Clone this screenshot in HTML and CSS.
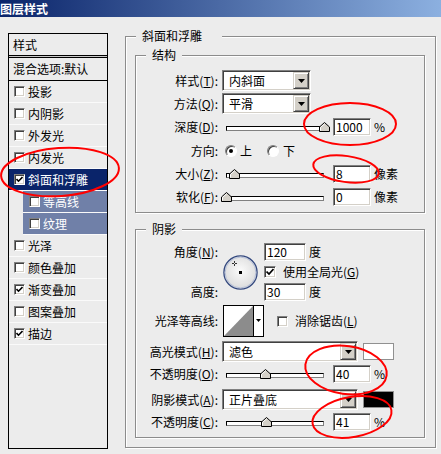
FILE: index.html
```html
<!DOCTYPE html>
<html lang="zh-CN">
<head>
<meta charset="utf-8">
<title>图层样式</title>
<link rel="stylesheet" href="styles.css">
</head>
<body>
<div class="window">
  <div class="titlebar">图层样式</div>
  <div class="content">
    <div class="stylelist">
      <div class="list-head">样式</div>
      <div class="list-sep"></div>
      <div class="list-blend">混合选项:默认</div>
      <div class="list-item"><span class="cb"></span>投影</div>
      <div class="list-item"><span class="cb"></span>内阴影</div>
      <div class="list-item"><span class="cb"></span>外发光</div>
      <div class="list-item"><span class="cb"></span>内发光</div>
      <div class="list-item selected"><span class="cb"><svg width="7" height="7" viewBox="0 0 7 7"><polyline points="0.5,3 2.5,5.2 6.5,1" fill="none" stroke="#000" stroke-width="1.6"/></svg></span>斜面和浮雕</div>
      <div class="list-item sub"><span class="cb"></span>等高线</div>
      <div class="list-item sub"><span class="cb"></span>纹理</div>
      <div class="list-item"><span class="cb"></span>光泽</div>
      <div class="list-item"><span class="cb"></span>颜色叠加</div>
      <div class="list-item"><span class="cb"><svg width="7" height="7" viewBox="0 0 7 7"><polyline points="0.5,3 2.5,5.2 6.5,1" fill="none" stroke="#000" stroke-width="1.6"/></svg></span>渐变叠加</div>
      <div class="list-item"><span class="cb"></span>图案叠加</div>
      <div class="list-item"><span class="cb"><svg width="7" height="7" viewBox="0 0 7 7"><polyline points="0.5,3 2.5,5.2 6.5,1" fill="none" stroke="#000" stroke-width="1.6"/></svg></span>描边</div>
    </div>

    <div class="group outer">
      <div class="legend legend-outer">斜面和浮雕</div>

      <div class="group inner structure">
        <div class="legend">结构</div>
        <div class="row r-style">
          <span class="lbl">样式(<u>T</u>):</span>
          <div class="select w-short"><span class="select-text">内斜面</span><span class="select-btn"><svg width="7" height="4" viewBox="0 0 7 4"><path d="M0 0h7L3.5 4z" fill="#000"/></svg></span></div>
        </div>
        <div class="row r-method">
          <span class="lbl">方法(<u>Q</u>):</span>
          <div class="select w-short"><span class="select-text">平滑</span><span class="select-btn"><svg width="7" height="4" viewBox="0 0 7 4"><path d="M0 0h7L3.5 4z" fill="#000"/></svg></span></div>
        </div>
        <div class="row r-depth">
          <span class="lbl">深度(<u>D</u>):</span>
          <div class="slider"><div class="track"></div><svg class="thumb" style="left:100%" width="11" height="10" viewBox="0 0 11 10"><path d="M0.5 9.5V5L5.5 0.5L10.5 5V9.5Z" fill="#d4d0c8" stroke="#000"/><path d="M1.5 8.5V5.4L5.5 1.9" fill="none" stroke="#fff"/></svg></div>
          <div class="input">1000</div>
          <span class="unit">%</span>
        </div>
        <div class="row r-dir">
          <span class="lbl">方向:</span>
          <span class="radio on"></span><span class="radio-label">上</span>
          <span class="radio second"></span><span class="radio-label second-label">下</span>
        </div>
        <div class="row r-size">
          <span class="lbl">大小(<u>Z</u>):</span>
          <div class="slider"><div class="track"></div><svg class="thumb" style="left:8%" width="11" height="10" viewBox="0 0 11 10"><path d="M0.5 9.5V5L5.5 0.5L10.5 5V9.5Z" fill="#d4d0c8" stroke="#000"/><path d="M1.5 8.5V5.4L5.5 1.9" fill="none" stroke="#fff"/></svg></div>
          <div class="input">8</div>
          <span class="unit">像素</span>
        </div>
        <div class="row r-soften">
          <span class="lbl">软化(<u>F</u>):</span>
          <div class="slider"><div class="track"></div><svg class="thumb" style="left:0%" width="11" height="10" viewBox="0 0 11 10"><path d="M0.5 9.5V5L5.5 0.5L10.5 5V9.5Z" fill="#d4d0c8" stroke="#000"/><path d="M1.5 8.5V5.4L5.5 1.9" fill="none" stroke="#fff"/></svg></div>
          <div class="input">0</div>
          <span class="unit">像素</span>
        </div>
      </div>

      <div class="group inner shadow">
        <div class="legend">阴影</div>
        <div class="angle-block">
          <span class="lbl lbl-angle">角度(<u>N</u>):</span>
          <svg class="dial" width="35" height="35" viewBox="0 0 35 35">
            <defs><radialGradient id="dg" cx="50%" cy="45%" r="60%"><stop offset="0" stop-color="#fbfbfb"/><stop offset="1" stop-color="#d8d8d8"/></radialGradient></defs>
            <circle cx="17.5" cy="17.5" r="16.6" fill="url(#dg)" stroke="#34497f" stroke-width="1.3"/>
            <circle cx="17.5" cy="17.5" r="15.4" fill="none" stroke="#a9b6d4" stroke-width="0.8"/>
            <path d="M11.5 6v2M11.5 9v2M9 8.5h2M12 8.5h2" stroke="#333" stroke-width="1"/>
            <rect x="16" y="16" width="3" height="3" fill="#000"/>
          </svg>
          <div class="cell cell-angle"><div class="input angle">120</div><span class="unit">度</span></div>
          <div class="cell cell-global"><span class="cb cb-lg"><svg width="8" height="8" viewBox="0 0 8 8"><polyline points="0.5,3.5 3,6 7.5,1" fill="none" stroke="#000" stroke-width="1.7"/></svg></span><span class="cb-label">使用全局光(<u>G</u>)</span></div>
          <span class="lbl lbl-alt">高度:</span>
          <div class="cell cell-alt"><div class="input angle">30</div><span class="unit">度</span></div>
        </div>
        <div class="row r-contour">
          <span class="lbl">光泽等高线:</span>
          <svg class="contour" width="41" height="32" viewBox="0 0 41 32">
            <rect x="0.5" y="0.5" width="40" height="31" fill="#fff" stroke="#000"/>
            <path d="M1 31L30 1V31Z" fill="#8c8c8c"/>
            <line x1="30.5" y1="1" x2="30.5" y2="31" stroke="#000"/>
            <path d="M33 14h5l-2.5 3z" fill="#000"/>
          </svg>
          <span class="cb"></span><span class="cb-label">消除锯齿(<u>L</u>)</span>
        </div>
        <div class="row r-hmode">
          <span class="lbl">高光模式(<u>H</u>):</span>
          <div class="select w-long"><span class="select-text">滤色</span><span class="select-btn"><svg width="7" height="4" viewBox="0 0 7 4"><path d="M0 0h7L3.5 4z" fill="#000"/></svg></span></div>
          <span class="swatch white"></span>
        </div>
        <div class="row r-hop">
          <span class="lbl">不透明度(<u>O</u>):</span>
          <div class="slider"><div class="track"></div><svg class="thumb" style="left:40%" width="11" height="10" viewBox="0 0 11 10"><path d="M0.5 9.5V5L5.5 0.5L10.5 5V9.5Z" fill="#d4d0c8" stroke="#000"/><path d="M1.5 8.5V5.4L5.5 1.9" fill="none" stroke="#fff"/></svg></div>
          <div class="input">40</div>
          <span class="unit">%</span>
        </div>
        <div class="row r-smode">
          <span class="lbl">阴影模式(<u>A</u>):</span>
          <div class="select w-long"><span class="select-text">正片叠底</span><span class="select-btn"><svg width="7" height="4" viewBox="0 0 7 4"><path d="M0 0h7L3.5 4z" fill="#000"/></svg></span></div>
          <span class="swatch black"></span>
        </div>
        <div class="row r-sop">
          <span class="lbl">不透明度(<u>C</u>):</span>
          <div class="slider"><div class="track"></div><svg class="thumb" style="left:41%" width="11" height="10" viewBox="0 0 11 10"><path d="M0.5 9.5V5L5.5 0.5L10.5 5V9.5Z" fill="#d4d0c8" stroke="#000"/><path d="M1.5 8.5V5.4L5.5 1.9" fill="none" stroke="#fff"/></svg></div>
          <div class="input">41</div>
          <span class="unit">%</span>
        </div>
      </div>
    </div>
  </div>

  <svg class="annot" width="441" height="454" viewBox="0 0 441 454">
    <g fill="none" stroke="#f00" stroke-width="2">
      <ellipse cx="60" cy="172" rx="59" ry="24" transform="rotate(-4 60 172)"/>
      <ellipse cx="350" cy="124" rx="46" ry="21"/>
      <ellipse cx="346" cy="169" rx="33" ry="13" transform="rotate(8 346 169)"/>
      <ellipse cx="346" cy="370" rx="41" ry="24" transform="rotate(8 346 370)"/>
      <ellipse cx="352" cy="417" rx="40" ry="20" transform="rotate(-10 352 417)"/>
    </g>
  </svg>
</div>
</body>
</html>
```
FILE: styles.css
```css
* { box-sizing: border-box; }
html, body { margin: 0; padding: 0; }
body {
  background: #ececec;
  font-family: "Noto Sans CJK SC", "Noto Sans CJK JP", sans-serif;
  font-size: 12px;
  line-height: 14px;
  color: #000;
}
u { text-decoration: underline; text-underline-offset: 1px; }

.window { position: relative; width: 441px; height: 454px; overflow: hidden; background: #ececec; }

.titlebar {
  height: 17px;
  line-height: 17px;
  background: linear-gradient(to right, #0a246a 0%, #8cb0e0 100%);
  color: #fff;
  font-weight: bold;
  font-size: 12px;
}

.content { display: flex; align-items: flex-start; padding: 16px 0 0 8px; }

/* ---------- style list ---------- */
.stylelist { width: 100px; height: 416px; border: 1px solid #000; flex: none; }
.list-head { height: 22px; line-height: 21px; padding-left: 4px; border-bottom: 1px solid #000; }
.list-sep { height: 2px; background: #c8c8c8; border-bottom: 1px solid #000; }
.list-blend { height: 23px; line-height: 22px; padding-left: 4px; border-bottom: 1px solid #000; }
.list-item {
  height: 22px;
  display: flex;
  align-items: center;
  padding-left: 5px;
  border-bottom: 1px solid #fafafa;
}
.list-item .cb { margin-right: 3px; }
.list-item.selected { background: #0a246a; color: #fff; }
.list-item.sub { margin-left: 14px; padding-left: 6px; background: #7080a8; color: #fff; }

.cb {
  width: 11px;
  height: 11px;
  flex: none;
  display: flex;
  align-items: center;
  justify-content: center;
  background: #fff;
  border: 1px solid;
  border-color: #808080 #fff #fff #808080;
  box-shadow: inset 1px 1px 0 #404040, inset -1px -1px 0 #d4d0c8;
}
.cb-lg { width: 12px; height: 12px; }
.cb-label { margin-left: 7px; }

/* ---------- groups ---------- */
.group {
  border: 1px solid #8c8c8c;
  box-shadow: inset 1px 1px 0 #fff, 1px 1px 0 #fff;
}
.outer { width: 311px; height: 412px; margin: 3px 0 0 17px; padding: 0 0 0 9px; flex: none; }
.legend {
  width: max-content;
  height: 14px;
  line-height: 14px;
  margin-top: -8px;
  background: #ececec;
}
.legend-outer { margin-left: 1px; padding: 0 20px 0 6px; }
.inner { width: 290px; }
.inner .legend { margin-left: 10px; padding: 0 6px; }
.structure { height: 158px; margin-top: 12px; }
.shadow { height: 209px; margin-top: 16px; }

/* ---------- rows ---------- */
.row { display: flex; align-items: center; }
.lbl { width: 82px; flex: none; text-align: right; white-space: nowrap; }

.r-style { margin-top: 8px; height: 21px; }
.r-method { margin-top: 2px; height: 21px; }
.r-depth { height: 26px; }
.r-dir { height: 22px; }
.r-size { height: 23px; }
.r-soften { height: 24px; }

.select {
  display: flex;
  height: 21px;
  margin-left: 4px;
  padding: 1px;
  flex: none;
  background: #fff;
  border: 1px solid;
  border-color: #808080 #fff #fff #808080;
  box-shadow: inset 1px 1px 0 #404040, inset -1px -1px 0 #d4d0c8;
}
.w-short { width: 89px; }
.w-long { width: 136px; }
.select-text { flex: 1; padding-left: 5px; line-height: 17px; white-space: nowrap; }
.select-btn {
  width: 16px;
  flex: none;
  display: flex;
  align-items: center;
  justify-content: center;
  background: #d4d0c8;
  border: 1px solid;
  border-color: #d4d0c8 #404040 #404040 #d4d0c8;
  box-shadow: inset 1px 1px 0 #fff, inset -1px -1px 0 #808080;
}

.slider {
  position: relative;
  width: 98px;
  height: 10px;
  margin-left: 8px;
  flex: none;
  display: flex;
  align-items: flex-end;
}
.track {
  width: 100%;
  height: 5px;
  margin-bottom: 1px;
  background: #fff;
  border: 1px solid;
  border-color: #000 #808080 #808080 #000;
}
.thumb { position: absolute; top: 0; margin-left: -5px; }

.input {
  width: 38px;
  height: 18px;
  margin-left: 9px;
  flex: none;
  padding-left: 2px;
  line-height: 16px;
  background: #fff;
  border: 1px solid;
  border-color: #808080 #fff #fff #808080;
  box-shadow: inset 1px 1px 0 #404040, inset -1px -1px 0 #d4d0c8;
}
.input.angle { width: 42px; margin-left: 0; }
.unit { margin-left: 3px; }

.radio {
  width: 12px;
  height: 12px;
  flex: none;
  margin-left: 7px;
  border-radius: 50%;
  display: flex;
  align-items: center;
  justify-content: center;
  background: #fff;
  border: 1px solid;
  border-color: #808080 #fff #fff #808080;
  box-shadow: inset 1px 1px 0 #404040;
}
.radio.on::after { content: ""; width: 4px; height: 4px; border-radius: 50%; background: #000; }
.radio.second { margin-left: 15px; }
.radio-label { margin-left: 3px; }
.radio-label.second-label { margin-left: 4px; }

/* ---------- shadow group ---------- */
.angle-block {
  display: grid;
  grid-template-columns: 82px 46px auto;
  grid-template-rows: 18px 22px 18px;
  align-items: center;
  margin-top: 7px;
}
.lbl-angle { grid-row: 1; grid-column: 1; }
.dial { grid-row: 1 / 4; grid-column: 2; margin-left: 5px; align-self: center; }
.cell { display: flex; align-items: center; }
.cell-angle { grid-row: 1; grid-column: 3; }
.cell-global { grid-row: 2; grid-column: 3; }
.lbl-alt { grid-row: 3; grid-column: 1; }
.cell-alt { grid-row: 3; grid-column: 3; }

.r-contour { height: 32px; margin-top: 4px; }
.contour { margin-left: 5px; flex: none; }
.r-contour .cb { margin-left: 13px; }

.r-hmode { height: 21px; margin-top: 4px; }
.r-hop { height: 24px; }
.r-smode { height: 21px; margin-top: 3px; }
.r-sop { height: 24px; }

.swatch { width: 31px; height: 17px; margin-left: 5px; flex: none; border: 1px solid #909090; }
.swatch.white { background: #fff; }
.swatch.black { background: #000; }

/* ---------- annotations ---------- */
.annot { position: absolute; left: 0; top: 0; pointer-events: none; }
```
